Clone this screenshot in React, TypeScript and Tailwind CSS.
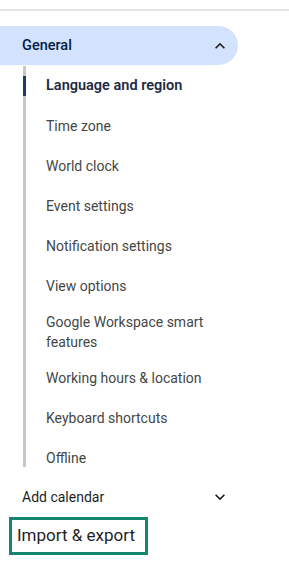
import React from "react";

const items = [
  "Time zone",
  "World clock",
  "Event settings",
  "Notification settings",
  "View options",
  "Google Workspace smart features",
  "Working hours & location",
  "Keyboard shortcuts",
  "Offline",
];

function Chevron({ up }: { up?: boolean }) {
  return (
    <svg width="20" height="20" viewBox="0 0 24 24" fill="#1f1f1f">
      {up ? (
        <path d="M7.41 15.41 12 10.83l4.59 4.58L18 14l-6-6-6 6z" />
      ) : (
        <path d="M7.41 8.59 12 13.17l4.59-4.58L18 10l-6 6-6-6z" />
      )}
    </svg>
  );
}

export default function App() {
  return (
    <div
      className="w-[289px] h-[565px] bg-white overflow-hidden text-[#1f1f1f]"
      style={{ fontFamily: "Roboto, 'Liberation Sans', sans-serif" }}
    >
      <div className="pt-[9px]">
        <div className="h-[2px] bg-[#e3e3e3]" />
      </div>
      <div className="mt-[15px] h-[39px] w-[238px] rounded-r-full bg-[#d3e3fd] flex items-center justify-between pl-[22px] pr-[8px]">
        <span className="text-[14.5px] font-medium text-[#041e49]">General</span>
        <Chevron up />
      </div>
      <div className="ml-[23px] mt-[1px] border-l-[3px] border-[#c7c7c7] h-[401px] relative">
        <div className="absolute left-[-3px] top-[10px] w-[3px] h-[20px] bg-[#1f3a6e]" />
        <div className="pl-[20px]">
          <div className="min-h-[40px] py-[6px] flex items-center text-[14.5px] leading-[20px] font-semibold text-[#1f2a44]">
            Language and region
          </div>
          {items.map((t) => (
            <div
              key={t}
              className="min-h-[40px] py-[6px] flex items-center text-[14px] leading-[20px] text-[#444746] w-[185px]"
            >
              {t}
            </div>
          ))}
        </div>
      </div>
      <div className="mt-[10px] h-[40px] w-[238px] flex items-center justify-between pl-[22px] pr-[8px]">
        <span className="text-[14px] text-[#1f1f1f]">Add calendar</span>
        <Chevron />
      </div>
      <div className="ml-[9px] w-[139px] h-[38px] border-[3px] border-[#14866b] flex items-center pl-[5px]">
        <span className="text-[17px] text-[#1f1f1f]">Import &amp; export</span>
      </div>
    </div>
  );
}
